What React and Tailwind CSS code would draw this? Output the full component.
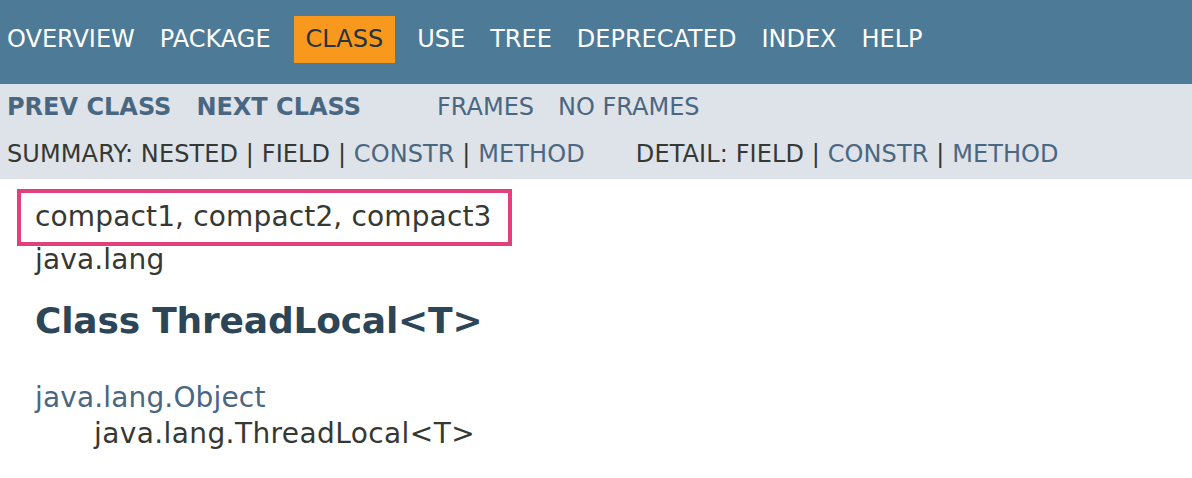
const NAV = ["OVERVIEW", "PACKAGE", "CLASS", "USE", "TREE", "DEPRECATED", "INDEX", "HELP"];

function TopNav() {
    return (
        <div className="flex h-[84px] gap-px bg-[#4d7a97] pl-[7px] pt-4">
            {NAV.map((item, i) => {
                if (item === "CLASS") {
                    return (
                        <div key={item} className="ml-[10px] mr-[9px] h-[47px] bg-[#f8981d] px-3 leading-[47px] text-[#253441]">
                            {item}
                        </div>
                    );
                }
                return (
                    <div
                        key={item}
                        className={`h-[47px] leading-[47px] text-white ${i === 0 ? "pr-3" : "px-3"}`}
                    >
                        {item}
                    </div>
                );
            })}
        </div>
    );
}

function SubNav() {
    return (
        <div className="bg-[#dee3e9] pl-[7px]">
            {/* prev / next / frames */}
            <div className="flex h-[46px] items-center leading-[46px]">
                <span className="font-bold text-[#4a6782]">PREV CLASS</span>
                <span className="ml-[25px] font-bold text-[#4a6782]">NEXT CLASS</span>
                <span className="ml-[76px] text-[#4a6782]">FRAMES</span>
                <span className="ml-6 text-[#4a6782]">NO FRAMES</span>
            </div>
            {/* summary / detail */}
            <div className="flex h-[49px] items-center whitespace-pre leading-[49px] tracking-[0.1px] text-[#353833]">
                <span>
                    SUMMARY: NESTED | FIELD | <span className="text-[#4a6782]">CONSTR</span> |{" "}
                    <span className="text-[#4a6782]">METHOD</span>
                </span>
                <span className="ml-[51px]">
                    DETAIL: FIELD | <span className="text-[#4a6782]">CONSTR</span> |{" "}
                    <span className="text-[#4a6782]">METHOD</span>
                </span>
            </div>
        </div>
    );
}

export default function App() {
    return (
        <div className="h-[478px] w-[1192px] overflow-hidden bg-white font-['DejaVu_Sans',sans-serif] text-[24px]">
            <TopNav />
            <SubNav />

            <div className="pl-[17px] pt-[10px] text-[28px] tracking-[0.15px] text-[#353833]">
                <div className="inline-block h-[57px] border-4 border-[#e0407b] pb-[2px] pl-[14px] pr-4 leading-[47px]">
                    compact1, compact2, compact3
                </div>
                <div className="pl-[18px] leading-[28px]">java.lang</div>
                <h2 className="mt-[26px] pl-[18px] text-[36px] font-bold leading-[42px] tracking-[-0.2px] text-[#2c4557]">
                    Class ThreadLocal&lt;T&gt;
                </h2>
                <div className="mt-[38px] pl-[18px] leading-[36px] text-[#4a6782]">java.lang.Object</div>
                <div className="pl-[77px] leading-[36px] tracking-[0.4px]">java.lang.ThreadLocal&lt;T&gt;</div>
            </div>
        </div>
    );
}
